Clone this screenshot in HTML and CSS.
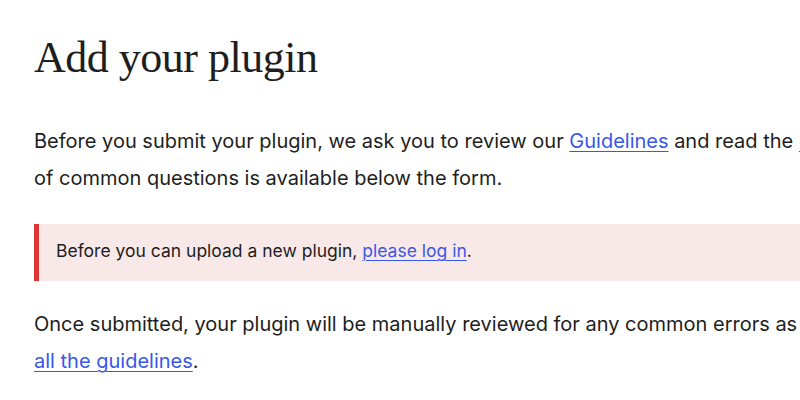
FILE: index.html
```html
<!DOCTYPE html>
<html lang="en">
<head>
<meta charset="utf-8">
<title>Add your plugin</title>
<link rel="stylesheet" href="styles.css">
</head>
<body>
<main class="page">
  <h1 class="title">Add your plugin</h1>
  <p class="text">Before you submit your plugin, we ask you to review our <a href="#">Guidelines</a> and read the <a href="#">Plugin Developer FAQ</a>. A list of common questions is available below the form.</p>
  <div class="notice notice-error">
    <p>Before you can upload a new plugin, <a href="#">please log in</a>.</p>
  </div>
  <p class="text text-after-notice">Once submitted, your plugin will be manually reviewed for any common errors as well as ensuring it follows <a href="#">all the guidelines</a>.</p>
</main>
</body>
</html>
```

FILE: styles.css
```css
html, body {
  margin: 0;
  padding: 0;
  background: #fff;
}
body {
  width: 800px;
  height: 400px;
  overflow: hidden;
  color: #1e1e1e;
  font-family: Inter, "Noto Sans", sans-serif;
}
.page {
  width: 1032px;
  padding: 32px 0 0 34px;
}
.title {
  margin: 0;
  font-family: "Liberation Serif", "DejaVu Serif", serif;
  font-weight: 400;
  font-size: 44px;
  line-height: 52px;
  letter-spacing: -0.5px;
  color: #1e1e1e;
}
.text {
  margin: 39px 0 0;
  font-size: 20px;
  line-height: 37px;
}
a {
  color: #3858e9;
  text-decoration: underline;
  text-decoration-thickness: 1px;
  text-underline-offset: 3px;
}
.notice {
  margin-top: 27px;
  background: #f9e8e8;
  border-left: 5px solid #e03535;
  padding: 13px 0 16px 17px;
}
.notice p {
  margin: 0;
  font-size: 17.5px;
  line-height: 28px;
}
.text-after-notice {
  margin-top: 25px;
}
```
